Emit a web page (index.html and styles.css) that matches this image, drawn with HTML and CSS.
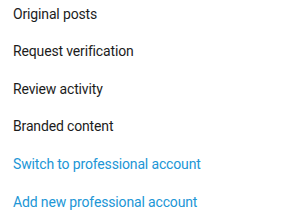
FILE: index.html
```html
<!DOCTYPE html>
<html>
<head>
<meta charset="utf-8">
<link rel="stylesheet" href="styles.css">
</head>
<body>
<ul class="menu">
  <li class="item">Original posts</li>
  <li class="item">Request verification</li>
  <li class="item">Review activity</li>
  <li class="item">Branded content</li>
  <li class="item link">Switch to professional account</li>
  <li class="item link">Add new professional account</li>
</ul>
</body>
</html>
```
FILE: styles.css
```css
html, body {
  margin: 0;
  padding: 0;
  background: #ffffff;
}
body {
  font-family: Roboto, "Noto Sans", sans-serif;
  overflow: hidden;
}
.menu {
  list-style: none;
  margin: -4.3px 0 0 0;
  padding: 0 0 0 13px;
}
.item {
  height: 37.6px;
  line-height: 37.6px;
  font-size: 14px;
  letter-spacing: -0.15px;
  color: #1c1c1c;
}
.link {
  color: #2196d6;
}
```
